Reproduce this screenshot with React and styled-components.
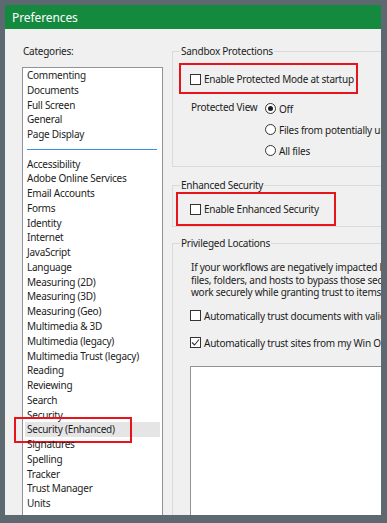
import React from "react";
import styled, { createGlobalStyle } from "styled-components";

const GlobalStyle = createGlobalStyle`
  html, body {
    margin: 0;
    padding: 0;
    background: #5e6870;
  }
  body {
    font-family: "Noto Sans", "Open Sans", sans-serif;
  }
`;

const categories = [
  "Commenting",
  "Documents",
  "Full Screen",
  "General",
  "Page Display",
  "-",
  "Accessibility",
  "Adobe Online Services",
  "Email Accounts",
  "Forms",
  "Identity",
  "Internet",
  "JavaScript",
  "Language",
  "Measuring (2D)",
  "Measuring (3D)",
  "Measuring (Geo)",
  "Multimedia & 3D",
  "Multimedia (legacy)",
  "Multimedia Trust (legacy)",
  "Reading",
  "Reviewing",
  "Search",
  "Security",
  "Security (Enhanced)",
  "Signatures",
  "Spelling",
  "Tracker",
  "Trust Manager",
  "Units"
];

const SELECTED = "Security (Enhanced)";

const Window = styled.div`
  width: 387px;
  height: 523px;
  box-sizing: border-box;
  padding: 5px 6px 8px 5px;
  background: #5e6870;
  display: flex;
`;

const Dialog = styled.div`
  flex: 1;
  display: flex;
  flex-direction: column;
  overflow: hidden;
  background: #f0f0f0;
  color: #1c1c1c;
  font-size: 10px;
  letter-spacing: -0.25px;
`;

const TitleBar = styled.div`
  height: 24px;
  flex: none;
  background: #148a3f;
  color: #fff;
  font-size: 12px;
  letter-spacing: -0.1px;
  display: flex;
  align-items: center;
  padding-left: 7px;
`;

const Body = styled.div`
  flex: 1;
  display: flex;
  min-height: 0;
  overflow: hidden;
`;

const Sidebar = styled.div`
  width: 167px;
  flex: none;
  box-sizing: border-box;
  padding: 15px 0 0 17px;
  display: flex;
  flex-direction: column;
`;

const SideLabel = styled.div`
  height: 15px;
  line-height: 15px;
  padding-left: 1px;
  margin-bottom: 8px;
`;

const CategoryList = styled.div`
  width: 141px;
  flex: 1;
  box-sizing: border-box;
  background: #fff;
  border: 1px solid #8f949a;
  border-bottom: none;
`;

const Item = styled.div`
  position: relative;
  height: 14.78px;
  line-height: 14.78px;
  margin: 0 2px;
  padding-left: 2px;
  white-space: nowrap;
  background: ${p => (p.$selected ? "#e5e5e5" : "transparent")};
`;

const Separator = styled.div`
  height: 14.78px;
  display: flex;
  align-items: center;
  padding: 0 5px 0 4px;

  &::after {
    content: "";
    flex: 1;
    height: 1px;
    background: #3b8fe0;
  }
`;

const Callout = styled.div`
  position: absolute;
  left: ${p => p.$left}px;
  top: ${p => p.$top}px;
  width: ${p => p.$w}px;
  height: ${p => p.$h}px;
  box-sizing: border-box;
  border: 2px solid #e8141c;
  pointer-events: none;
`;

const Panel = styled.div`
  width: 260px;
  flex: none;
  padding-top: 15px;
  display: flex;
  flex-direction: column;
`;

const Group = styled.fieldset`
  margin: ${p => p.$gap || 0}px 0 0 0;
  padding: 0 0 ${p => p.$bottom || 0}px 7px;
  border: 1px solid #dadada;
  min-width: 0;
`;

const Legend = styled.legend`
  padding: 0 1px;
  line-height: 14px;
`;

const GroupBody = styled.div`
  padding: ${p => p.$top || 0}px 0 0 10px;
  display: flex;
  flex-direction: column;
`;

const CheckRow = styled.div`
  position: relative;
  height: 20px;
  margin-top: ${p => p.$gap || 0}px;
  display: flex;
  align-items: center;
  gap: 3px;
  white-space: nowrap;
`;

const Box = styled.span`
  width: 11px;
  height: 11px;
  flex: none;
  box-sizing: border-box;
  border: 1px solid ${p => (p.$disabled ? "#c6c6c6" : "#333")};
  background: #fff;
  display: flex;
  align-items: center;
  justify-content: center;
`;

const CheckLabel = styled.span`
  width: ${p => (p.$w ? `${p.$w}px` : "auto")};
  flex: none;
`;

const ViewBlock = styled.div`
  margin-top: 9px;
  display: flex;
`;

const ViewLabel = styled.div`
  width: 74px;
  padding-left: 1px;
  line-height: 18px;
  flex: none;
`;

const RadioColumn = styled.div`
  display: flex;
  flex-direction: column;
`;

const RadioRow = styled.div`
  height: 21px;
  display: flex;
  align-items: center;
  gap: 3px;
  white-space: nowrap;
`;

const Radio = styled.span`
  width: 11px;
  height: 11px;
  flex: none;
  box-sizing: border-box;
  border-radius: 50%;
  border: 1px solid #333;
  background: #fff;
  display: flex;
  align-items: center;
  justify-content: center;

  &::after {
    content: "";
    width: 5px;
    height: 5px;
    border-radius: 50%;
    background: ${p => (p.$on ? "#1c1c1c" : "transparent")};
  }
`;

const Paragraph = styled.div`
  padding-left: 1px;
  line-height: 12.5px;
  white-space: nowrap;
`;

const LocationList = styled.div`
  margin-top: 13px;
  height: 200px;
  background: #fff;
  border: 1px solid #8f949a;
`;

function Check({ checked, disabled, label, width }) {
  return (
    <>
      <Box $disabled={disabled}>
        {checked && (
          <svg width="9" height="9" viewBox="0 0 9 9">
            <polyline points="1,4.5 3.5,7 8,1.5" fill="none" stroke="#333" strokeWidth="1.1" />
          </svg>
        )}
      </Box>
      {label && <CheckLabel $w={width}>{label}</CheckLabel>}
    </>
  );
}

export default function App() {
  return (
    <Window>
      <GlobalStyle />
      <Dialog>
        <TitleBar>Preferences</TitleBar>
        <Body>
          <Sidebar>
            <SideLabel>Categories:</SideLabel>
            <CategoryList>
              {categories.map((c, i) =>
                c === "-" ? (
                  <Separator key={i} />
                ) : (
                  <Item key={i} $selected={c === SELECTED}>
                    {c}
                    {c === SELECTED && <Callout $left={-11} $top={-5.6} $w={118} $h={26} />}
                  </Item>
                )
              )}
            </CategoryList>
          </Sidebar>

          <Panel>
            <Group $bottom={5}>
              <Legend>Sandbox Protections</Legend>
              <GroupBody $top={11}>
                <CheckRow>
                  <Check label="Enable Protected Mode at startup" width={175} />
                  <Check disabled label="Run in AppContainer" />
                  <Callout $left={-11} $top={-6} $w={179} $h={31} />
                </CheckRow>
                <ViewBlock>
                  <ViewLabel>Protected View</ViewLabel>
                  <RadioColumn>
                    <RadioRow>
                      <Radio $on />
                      Off
                    </RadioRow>
                    <RadioRow>
                      <Radio />
                      Files from potentially unsafe locations
                    </RadioRow>
                    <RadioRow>
                      <Radio />
                      All files
                    </RadioRow>
                  </RadioColumn>
                </ViewBlock>
              </GroupBody>
            </Group>

            <Group $gap={11} $bottom={7}>
              <Legend>Enhanced Security</Legend>
              <GroupBody $top={7}>
                <CheckRow>
                  <Check label="Enable Enhanced Security" />
                  <Callout $left={-14} $top={-7} $w={160} $h={34} />
                </CheckRow>
              </GroupBody>
            </Group>

            <Group $gap={9}>
              <Legend>Privileged Locations</Legend>
              <GroupBody $top={11}>
                <Paragraph>
                  If your workflows are negatively impacted by security settings, use Privileged Locations
                  <br />
                  files, folders, and hosts to bypass those security setting restrictions. Privileged
                  <br />
                  work securely while granting trust to items in your workflow.
                </Paragraph>
                <CheckRow $gap={7}>
                  <Check label="Automatically trust documents with valid certification" />
                </CheckRow>
                <CheckRow $gap={7}>
                  <Check checked label="Automatically trust sites from my Win OS security zones" />
                </CheckRow>
                <LocationList />
              </GroupBody>
            </Group>
          </Panel>
        </Body>
      </Dialog>
    </Window>
  );
}
